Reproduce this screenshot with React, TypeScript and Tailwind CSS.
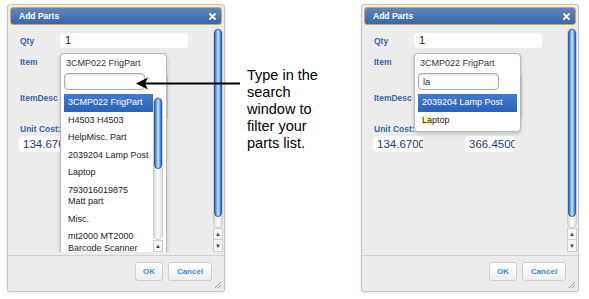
import type {FC} from "react";

type Variant = "full" | "filtered";

const ALL_PARTS: string[][] = [
    ["3CMP022 FrigPart"],
    ["H4503 H4503"],
    ["HelpMisc. Part"],
    ["2039204 Lamp Post"],
    ["Laptop"],
    ["793016019875", "Matt part"],
    ["Misc."],
    ["mt2000 MT2000", "Barcode Scanner"],
    ["Service Call"],
];

// aqua-ish scrollbar pieces
const track = "rounded-full border border-[#cdcdcd] bg-linear-to-r from-[#dadada] via-white to-[#e0e0e0]";
const thumb =
    "rounded-full border border-[#2a5cb5] bg-[image:repeating-linear-gradient(0deg,rgba(255,255,255,0.07)_0px,rgba(255,255,255,0.07)_1px,transparent_1px,transparent_2px),linear-gradient(90deg,#2f66c9,#8ec0f5_35%,#c4e2ff_55%,#6a9fe6_80%,#2f66c9)]";
const arrowBtn =
    "flex h-[12px] items-center justify-center border-x border-b border-[#cdcdcd] bg-[#f4f4f4] text-[6px] leading-none text-[#444]";

const DialogScroll: FC = () => (
    <div className="mr-[1px] mt-[3px] flex w-[10px] flex-col">
        <div className={`flex flex-1 flex-col ${track}`}>
            <div className={`h-[188px] ${thumb}`}/>
        </div>
        <div className={`${arrowBtn} border-t`}>▲</div>
        <div className={arrowBtn}>▼</div>
    </div>
);

const ListScroll: FC = () => (
    <div className="flex w-[10px] flex-col pt-[3px]">
        <div className={`flex h-[143px] flex-col ${track}`}>
            <div className={`h-[71px] ${thumb}`}/>
        </div>
        <div className={`${arrowBtn} border-t`}>▲</div>
        <div className={arrowBtn}>▼</div>
    </div>
);

const ItemDropdown: FC<{variant: Variant}> = ({variant}) => {
    const full = variant === "full";
    const query = full ? "" : "la";
    const rows = full ? ALL_PARTS : [["2039204 Lamp Post"], ["Laptop"]];
    const active = full ? "3CMP022 FrigPart" : "2039204 Lamp Post";

    return (
        <div className="absolute left-0 top-0 z-10 w-[107px] rounded-[4px] border border-[#b9b9b9] bg-white shadow-[0_2px_4px_rgba(0,0,0,0.18)]">
            <div className="flex h-[19px] items-center pl-[5px] text-[9px] text-[#333]">3CMP022 FrigPart</div>
            <input
                readOnly
                value={query}
                className="ml-[3px] block h-[17px] w-[81px] rounded-[4px] border border-[#a9a9a9] bg-white pl-[4px] text-[9.5px] text-[#333] shadow-[inset_0_1px_2px_rgba(0,0,0,0.15)] outline-none"
            />
            <div className={`mx-[3px] mt-[4px] flex ${full ? "h-[170px] overflow-hidden" : "pb-[2px]"}`}>
                <ul className="flex-1">
                    {rows.map((lines) => {
                        const isActive = lines[0] === active;
                        return (
                            <li
                                key={lines[0]}
                                className={`py-[3px] pl-[4px] text-[9px] leading-[11.5px] ${
                                    isActive
                                        ? "bg-linear-to-b from-[#3f7bd0] to-[#2d62b6] text-white"
                                        : "text-[#222]"
                                }`}
                            >
                                {!full && lines[0] === "Laptop" ? (
                                    <>
                                        <span className="bg-[#fff3b0]">La</span>ptop
                                    </>
                                ) : (
                                    lines.map((l) => <div key={l}>{l}</div>)
                                )}
                            </li>
                        );
                    })}
                </ul>
                {full && <ListScroll/>}
            </div>
        </div>
    );
};

const Label: FC<{text: string; className?: string}> = ({text, className = ""}) => (
    <div className={`w-[40px] text-[8.5px] font-bold leading-[10px] text-[#3d659e] ${className}`}>{text}</div>
);

const Grip: FC = () => (
    <svg viewBox="0 0 8 8" className="absolute bottom-[2px] right-[2px] h-[8px] w-[8px]" aria-hidden="true">
        <path d="M7 1L1 7M7 4L4 7M7 6.5L6.5 7" stroke="#8a8a8a" strokeWidth="0.9"/>
    </svg>
);

const AddPartsDialog: FC<{variant: Variant}> = ({variant}) => (
    <div className="flex h-[288px] w-[218px] flex-col rounded-[3px] border border-[#c6c6c6] bg-[#ececec] shadow-[0_1px_3px_rgba(0,0,0,0.12)]">
        {/* title bar */}
        <div className="mx-[2px] mt-[2px] flex h-[18px] items-center justify-between rounded-[3px] border border-[#dea54e] bg-linear-to-b from-[#5a87c3] to-[#3b67a3] pl-[8px] pr-[5px]">
            <span className="text-[8.5px] font-bold text-white">Add Parts</span>
            <svg viewBox="0 0 7 7" className="h-[7px] w-[7px]" aria-hidden="true">
                <path d="M1 1L6 6M6 1L1 6" stroke="white" strokeWidth="1.8" strokeLinecap="round"/>
            </svg>
        </div>

        {/* body */}
        <div className="flex h-[227px] overflow-hidden">
            <div className="flex-1 pl-[12px] pt-[8px]">
                <div className="flex h-[15px] items-center">
                    <Label text="Qty"/>
                    <div className="h-[15px] w-[128px] rounded-[4px] bg-white pl-[5px] text-[11px] leading-[15px] text-[#222]">1</div>
                </div>

                <div className="mt-[5px] flex h-[17px] items-center">
                    <Label text="Item"/>
                    <div className="relative h-[17px] w-[107px] self-start">
                        <ItemDropdown variant={variant}/>
                    </div>
                </div>

                <div className="mt-[3px] flex h-[50px] items-start">
                    <Label text="ItemDesc" className="mt-[20px]"/>
                    <div className="h-[47px] w-[108px] rounded-[3px] border border-[#cdcdcd] bg-white"/>
                </div>

                <Label text="Unit Cost:" className="mt-[1px] w-auto"/>
                <div className="-ml-[1px] mt-[2px] flex gap-[42px]">
                    {["134.6700", "366.4500"].map((v) => (
                        <div
                            key={v}
                            className="h-[16px] w-[50px] overflow-hidden whitespace-nowrap rounded-[4px] bg-white pl-[4px] text-[11.5px] leading-[16px] text-[#1f3b69]"
                        >
                            {v}
                        </div>
                    ))}
                </div>
            </div>
            <DialogScroll/>
        </div>

        {/* footer */}
        <div className="relative mt-[3px] flex flex-1 justify-end gap-[5px] border-t border-[#d2d2d2] pr-[12px] pt-[6px]">
            <button className="h-[19px] w-[28px] rounded-[3px] border border-[#d0d0d0] bg-linear-to-b from-white to-[#efefef] text-[8px] font-bold text-[#3c8ccf]">
                OK
            </button>
            <button className="h-[19px] w-[44px] rounded-[3px] border border-[#d0d0d0] bg-linear-to-b from-white to-[#efefef] text-[8px] font-bold text-[#3c8ccf]">
                Cancel
            </button>
            <Grip/>
        </div>
    </div>
);

export default function App() {
    return (
        <div className="relative flex h-[299px] w-[589px] overflow-hidden bg-white font-['Liberation_Sans',Arial,sans-serif]">
            <div className="ml-[7px] mt-[4px]">
                <AddPartsDialog variant="full"/>
            </div>

            <p className="ml-[22px] mt-[67px] w-[84px] self-start text-[14.5px] leading-[17px] text-black">
                Type in the search window to filter your parts list.
            </p>

            <div className="ml-[30px] mt-[4px]">
                <AddPartsDialog variant="filtered"/>
            </div>

            {/* pointer arrow, drawn over the left dialog */}
            <svg viewBox="0 0 105 13" className="absolute left-[136px] top-[77px] z-20 h-[13px] w-[105px]" aria-hidden="true">
                <path d="M0 6.5L12 0.5L9 6.5L12 12.5Z" fill="black"/>
                <path d="M9 6.5H104" stroke="black" strokeWidth="2"/>
            </svg>
        </div>
    );
}
